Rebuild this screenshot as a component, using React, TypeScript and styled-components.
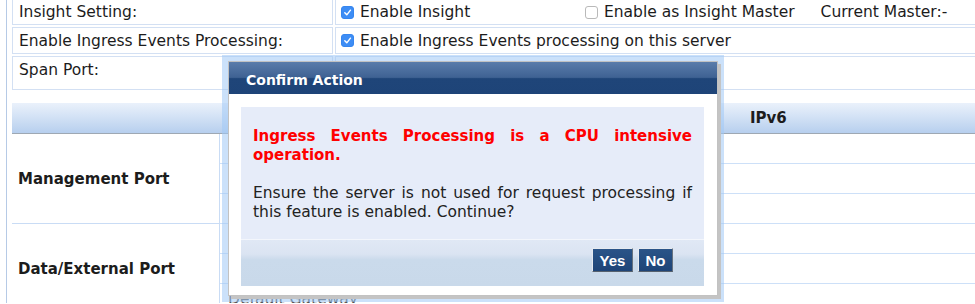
import { FunctionComponent, Fragment } from "react";
import styled, { createGlobalStyle } from "styled-components";

const GlobalStyle = createGlobalStyle`
  html, body {
    margin: 0;
    padding: 0;
    background: #ffffff;
    overflow: hidden;
  }
  body {
    font-family: "DejaVu Sans", Verdana, sans-serif;
    font-size: 15.5px;
    color: #1c1c1c;
  }
`;

const Page = styled.div`
  position: relative;
  width: 1100px;
  height: 304px;
  padding-left: 6px;
  box-sizing: border-box;
`;

const Frame = styled.div`
  height: 100%;
  border-left: 1px solid #b6cae6;
  padding-left: 5px;
`;

const SettingsGrid = styled.div`
  display: grid;
  grid-template-columns: 321px 1fr;
  grid-template-rows: 26px 27px 34px;
  gap: 2px;
  margin-top: -1px;
`;

const Cell = styled.div<{ $top?: boolean }>`
  box-sizing: border-box;
  border: 1px solid #d3e0f3;
  display: flex;
  align-items: ${(p) => (p.$top ? "flex-start" : "center")};
  padding: ${(p) => (p.$top ? "4px 6px 0" : "0 6px")};
  white-space: nowrap;
`;

const ValueCell = styled(Cell)`
  padding-left: 5px;
`;

const CheckItem = styled.label<{ $width?: number }>`
  display: flex;
  align-items: center;
  gap: 6px;
  width: ${(p) => (p.$width ? `${p.$width}px` : "auto")};
  flex-shrink: 0;
`;

const Box = styled.span<{ $on?: boolean }>`
  width: 13px;
  height: 13px;
  box-sizing: border-box;
  border-radius: 3px;
  border: 1px solid ${(p) => (p.$on ? "#3686ef" : "#b9b9b9")};
  background: ${(p) => (p.$on ? "#3d8df5" : "#ffffff")};
  display: inline-flex;
  align-items: center;
  justify-content: center;
`;

const MasterText = styled.span`
  margin-left: 26px;
`;

const PortSelect = styled.div`
  width: 231px;
  height: 22px;
  margin: 2px 0 0 4px;
  box-sizing: border-box;
  border: 1px solid #a9a9a9;
  border-radius: 3px;
  background: #f7f7f7;
`;

const cols = "208px 265px 250px 1fr";

const PortHeader = styled.div`
  margin-top: 13px;
  height: 31px;
  box-sizing: border-box;
  display: grid;
  grid-template-columns: ${cols};
  align-items: center;
  border-bottom: 1px solid #9ea8b3;
  background: linear-gradient(#eaf1fb 0%, #d6e4f6 40%, #b7cfee 100%);
  font-size: 15px;
  font-weight: bold;
`;

const HeadCell = styled.div`
  padding-left: 15px;
`;

const PortGrid = styled.div`
  display: grid;
  grid-template-columns: ${cols};
  grid-auto-rows: 30px;
`;

const PortLabel = styled.div`
  grid-row: span 3;
  box-sizing: border-box;
  border-right: 1px solid #c9dcf5;
  border-bottom: 1px solid #c9dcf5;
  display: flex;
  align-items: center;
  padding-left: 6px;
  font-size: 15px;
  font-weight: bold;
`;

const SubCell = styled.div`
  box-sizing: border-box;
  border-bottom: 1px solid #cde0f8;
  display: flex;
  align-items: center;
  padding-left: 8px;
  color: #555555;
  white-space: nowrap;
`;

const Modal = styled.div`
  position: absolute;
  left: 228px;
  top: 62px;
  width: 490px;
  height: 235px;
  box-sizing: border-box;
  border: 1px solid #c2c2c2;
  background: #ffffff;
  box-shadow: 3px 3px 0 #c4c4c4, 0 0 0 6px rgba(160, 200, 245, 0.55);
  display: flex;
  flex-direction: column;
`;

const ModalTitle = styled.div`
  height: 32px;
  box-sizing: border-box;
  padding: 3px 0 0 17px;
  display: flex;
  align-items: center;
  color: #ffffff;
  font-size: 14px;
  font-weight: bold;
  background: linear-gradient(#5a7caa 0%, #3f6293 48%, #1f4579 52%, #1e4478 100%);
`;

const ModalBody = styled.div`
  flex: 1;
  padding: 13px 13px 9px 12px;
  display: flex;
`;

const Panel = styled.div`
  flex: 1;
  background: #e6ecf9;
  display: flex;
  flex-direction: column;
`;

const Message = styled.div`
  padding: 20px 12px 0;
  line-height: 19px;
  text-align: justify;
`;

const Warning = styled.p`
  margin: 0 0 19px;
  color: #ff0000;
  font-size: 15px;
  font-weight: bold;
`;

const Note = styled.p`
  margin: 0;
  color: #222222;
`;

const Footer = styled.div`
  margin-top: auto;
  height: 47px;
  box-sizing: border-box;
  padding: 9px 31px 0 0;
  display: flex;
  justify-content: flex-end;
  align-items: flex-start;
  gap: 5px;
  background: linear-gradient(
    #f3f6fc 0px,
    #f3f6fc 1px,
    #e0e8f5 1px,
    #dbe4f2 15px,
    #cadaeb 21px,
    #c9d9ea 100%
  );
`;

const DialogButton = styled.button<{ $width: number }>`
  width: ${(p) => p.$width}px;
  height: 24px;
  padding: 0;
  border: 1px solid;
  border-color: #e6eaf0 #66727f #56616e #e6eaf0;
  background: linear-gradient(#2a5488, #1e4477);
  color: #ffffff;
  font-family: "Liberation Sans", Arial, sans-serif;
  font-size: 15px;
  font-weight: bold;
  cursor: pointer;
`;

const Tick: FunctionComponent = () => (
  <svg width="9" height="9" viewBox="0 0 10 10">
    <path
      d="M2 5.3 L4.2 7.6 L8.3 2.4"
      fill="none"
      stroke="#ffffff"
      strokeWidth="1.6"
      strokeLinecap="round"
      strokeLinejoin="round"
    />
  </svg>
);

const Checkbox: FunctionComponent<{ checked?: boolean }> = ({ checked }) => (
  <Box $on={checked}>{checked && <Tick />}</Box>
);

const ports = ["Management Port", "Data/External Port"];
const subRows = ["IP Address", "Subnet Mask", "Default Gateway"];

const App: FunctionComponent = () => {
  return (
    <>
      <GlobalStyle />
      <Page>
        <Frame>
          <SettingsGrid>
            <Cell>Insight Setting:</Cell>
            <ValueCell>
              <CheckItem $width={244}>
                <Checkbox checked />
                Enable Insight
              </CheckItem>
              <CheckItem>
                <Checkbox />
                Enable as Insight Master
              </CheckItem>
              <MasterText>Current Master:-</MasterText>
            </ValueCell>
            <Cell>Enable Ingress Events Processing:</Cell>
            <ValueCell>
              <CheckItem>
                <Checkbox checked />
                Enable Ingress Events processing on this server
              </CheckItem>
            </ValueCell>
            <Cell $top>Span Port:</Cell>
            <ValueCell $top>
              <PortSelect />
            </ValueCell>
          </SettingsGrid>

          <PortHeader>
            <HeadCell />
            <HeadCell />
            <HeadCell>IPv4</HeadCell>
            <HeadCell>IPv6</HeadCell>
          </PortHeader>
          <PortGrid>
            {ports.map((port) => (
              <Fragment key={port}>
                <PortLabel>{port}</PortLabel>
                {subRows.map((row) => (
                  <Fragment key={row}>
                    <SubCell>{row}</SubCell>
                    <SubCell />
                    <SubCell />
                  </Fragment>
                ))}
              </Fragment>
            ))}
          </PortGrid>
        </Frame>

        <Modal>
          <ModalTitle>Confirm Action</ModalTitle>
          <ModalBody>
            <Panel>
              <Message>
                <Warning>
                  Ingress Events Processing is a CPU intensive operation.
                </Warning>
                <Note>
                  Ensure the server is not used for request processing if this
                  feature is enabled. Continue?
                </Note>
              </Message>
              <Footer>
                <DialogButton $width={41}>Yes</DialogButton>
                <DialogButton $width={35}>No</DialogButton>
              </Footer>
            </Panel>
          </ModalBody>
        </Modal>
      </Page>
    </>
  );
};

export default App;
